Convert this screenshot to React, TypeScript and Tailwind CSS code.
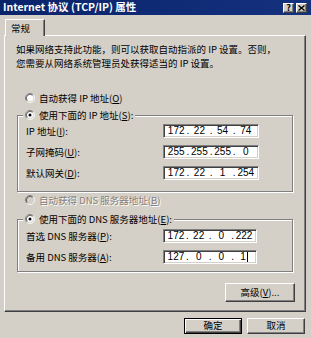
import React from 'react';

function Key({ k }: { k: string }) {
  return <span className="underline underline-offset-[1px]">{k}</span>;
}

function Radio({ checked, disabled }: { checked?: boolean; disabled?: boolean }) {
  return (
    <svg width="10" height="10" viewBox="0 0 12 12" className="shrink-0">
      <circle cx="6" cy="6" r="4.5" fill={disabled ? '#d4d0c8' : '#ffffff'} />
      <path d="M2.11 9.89A5.5 5.5 0 0 1 9.89 2.11" stroke="#808080" fill="none" />
      <path d="M9.89 2.11A5.5 5.5 0 0 1 2.11 9.89" stroke="#ffffff" fill="none" />
      <path d="M2.82 9.18A4.5 4.5 0 0 1 9.18 2.82" stroke="#404040" fill="none" />
      <path d="M9.18 2.82A4.5 4.5 0 0 1 2.82 9.18" stroke="#d4d0c8" fill="none" />
      {checked && <circle cx="6" cy="6" r="1.8" fill="#000000" />}
    </svg>
  );
}

function IpBox({ parts, className, caret }: { parts: string[]; className: string; caret?: boolean }) {
  return (
    <div
      className={`${className} h-[14px] shrink-0 bg-white border border-t-[#808080] border-l-[#808080] border-b-white border-r-white shadow-[inset_1px_1px_0_#404040,inset_-1px_-1px_0_#d4d0c8] flex items-center px-[2px] font-['Liberation_Sans',sans-serif] text-[10px] leading-none`}
    >
      {parts.map((p, i) => (
        <React.Fragment key={i}>
          <span className="flex-1 text-center whitespace-nowrap">
            {p}
            {caret && i === 3 && <span className="inline-block w-px h-[10px] bg-black align-middle ml-px" />}
          </span>
          {i < 3 && <span>.</span>}
        </React.Fragment>
      ))}
    </div>
  );
}

function Row({ label, children }: { label: React.ReactNode; children: React.ReactNode }) {
  return (
    <div className="flex items-center h-[14px]">
      <span className="w-[137px] shrink-0 whitespace-nowrap">{label}</span>
      {children}
    </div>
  );
}

function TitleBtn({ children }: { children: React.ReactNode }) {
  return (
    <div className="w-[11px] h-[10px] bg-[#d4d0c8] border border-t-white border-l-white border-b-[#404040] border-r-[#404040] shadow-[inset_-1px_-1px_0_#808080] flex items-center justify-center text-[9px] font-bold leading-none text-black">
      {children}
    </div>
  );
}

const raised =
  'bg-[#d4d0c8] border border-t-white border-l-white border-b-[#404040] border-r-[#404040] shadow-[inset_-1px_-1px_0_#808080]';

export default function App() {
  return (
    <div className="w-[311px] h-[338px] bg-[#d4d0c8] flex flex-col overflow-hidden text-[9.5px] leading-[12px] text-black font-['Noto_Sans_CJK_SC',sans-serif]">
      {/* title bar */}
      <div className="h-[15px] shrink-0 flex items-center justify-between pl-[3px] pr-[4px] bg-gradient-to-r from-[#0a246a] to-[#14317f]">
        <span className="text-white font-bold text-[10.5px] leading-none whitespace-nowrap">Internet 协议 (TCP/IP) 属性</span>
        <div className="flex gap-[2px]">
          <TitleBtn>?</TitleBtn>
          <TitleBtn>
            <svg width="7" height="6" viewBox="0 0 7 6">
              <path d="M0.5 0.5L6.5 5.5M6.5 0.5L0.5 5.5" stroke="#000" strokeWidth="1.4" />
            </svg>
          </TitleBtn>
        </div>
      </div>

      {/* tabs */}
      <div className="flex pt-[4px] pl-[5px]">
        <div className="relative z-10 w-[40px] h-[17px] -mb-px bg-[#d4d0c8] border-l border-t border-l-white border-t-white border-r border-r-[#404040] shadow-[inset_-1px_0_0_#808080] flex items-center pl-[5px] pb-[1px]">
          常规
        </div>
      </div>

      {/* panel */}
      <div className="ml-[4px] w-[302px] h-[277px] shrink-0 border border-t-white border-l-white border-b-[#404040] border-r-[#404040] shadow-[inset_-1px_-1px_0_#808080] flex flex-col">
        <div className="pt-[6px] pl-[11px] whitespace-nowrap leading-[14px]">
          <p>如果网络支持此功能，则可以获取自动指派的 IP 设置。否则，</p>
          <p>您需要从网络系统管理员处获得适当的 IP 设置。</p>
        </div>

        <div className="mt-[22px] pl-[20px] h-[12px] flex items-center gap-[4px]">
          <Radio />
          <span>
            自动获得 IP 地址(<Key k="O" />)
          </span>
        </div>

        <fieldset className="mt-[5px] mx-[12px] pl-[5px] pt-[3px] pb-[11px] border border-[#808080] shadow-[inset_1px_1px_0_#ffffff,1px_1px_0_#ffffff]">
          <legend className="px-[2px] bg-[#d4d0c8] h-[12px] flex items-center gap-[4px]">
            <Radio checked />
            <span>
              使用下面的 IP 地址(<Key k="S" />):
            </span>
          </legend>
          <div className="pl-[3px] flex flex-col gap-[7px]">
            <Row label={<>IP 地址(<Key k="I" />):</>}>
              <IpBox className="w-[96px]" parts={['172', '22', '54', '74']} />
            </Row>
            <Row label={<>子网掩码(<Key k="U" />):</>}>
              <IpBox className="w-[96px]" parts={['255', '255', '255', '0']} />
            </Row>
            <Row label={<>默认网关(<Key k="D" />):</>}>
              <IpBox className="w-[96px]" parts={['172', '22', '1', '254']} />
            </Row>
          </div>
        </fieldset>

        <div className="mt-[2px] pl-[20px] h-[12px] flex items-center gap-[4px] text-[#808080] [text-shadow:1px_1px_0_#ffffff]">
          <Radio disabled />
          <span>
            自动获得 DNS 服务器地址(<Key k="B" />)
          </span>
        </div>

        <fieldset className="mt-[7px] mx-[12px] pl-[5px] pt-[4px] pb-[7px] border border-[#808080] shadow-[inset_1px_1px_0_#ffffff,1px_1px_0_#ffffff]">
          <legend className="px-[2px] bg-[#d4d0c8] h-[12px] flex items-center gap-[4px]">
            <Radio checked />
            <span>
              使用下面的 DNS 服务器地址(<Key k="E" />):
            </span>
          </legend>
          <div className="pl-[3px] flex flex-col gap-[7px]">
            <Row label={<>首选 DNS 服务器(<Key k="P" />):</>}>
              <IpBox className="w-[94px]" parts={['172', '22', '0', '222']} />
            </Row>
            <Row label={<>备用 DNS 服务器(<Key k="A" />):</>}>
              <IpBox className="w-[94px]" parts={['127', '0', '0', '1']} caret />
            </Row>
          </div>
        </fieldset>

        <div className="mt-[11px] mr-[10px] self-end">
          <button className={`w-[70px] h-[19px] ${raised} flex items-center justify-center leading-none`}>
            高级(<Key k="V" />)...
          </button>
        </div>
      </div>

      {/* dialog buttons */}
      <div className="mt-[6px] pr-[6px] flex justify-end gap-[5px]">
        <button className="w-[58px] h-[16px] bg-[#d4d0c8] border border-black shadow-[inset_1px_1px_0_#ffffff,inset_-1px_-1px_0_#404040,inset_-2px_-2px_0_#808080] flex items-center justify-center leading-none">
          确定
        </button>
        <button className={`w-[58px] h-[16px] ${raised} flex items-center justify-center leading-none`}>
          取消
        </button>
      </div>
    </div>
  );
}
